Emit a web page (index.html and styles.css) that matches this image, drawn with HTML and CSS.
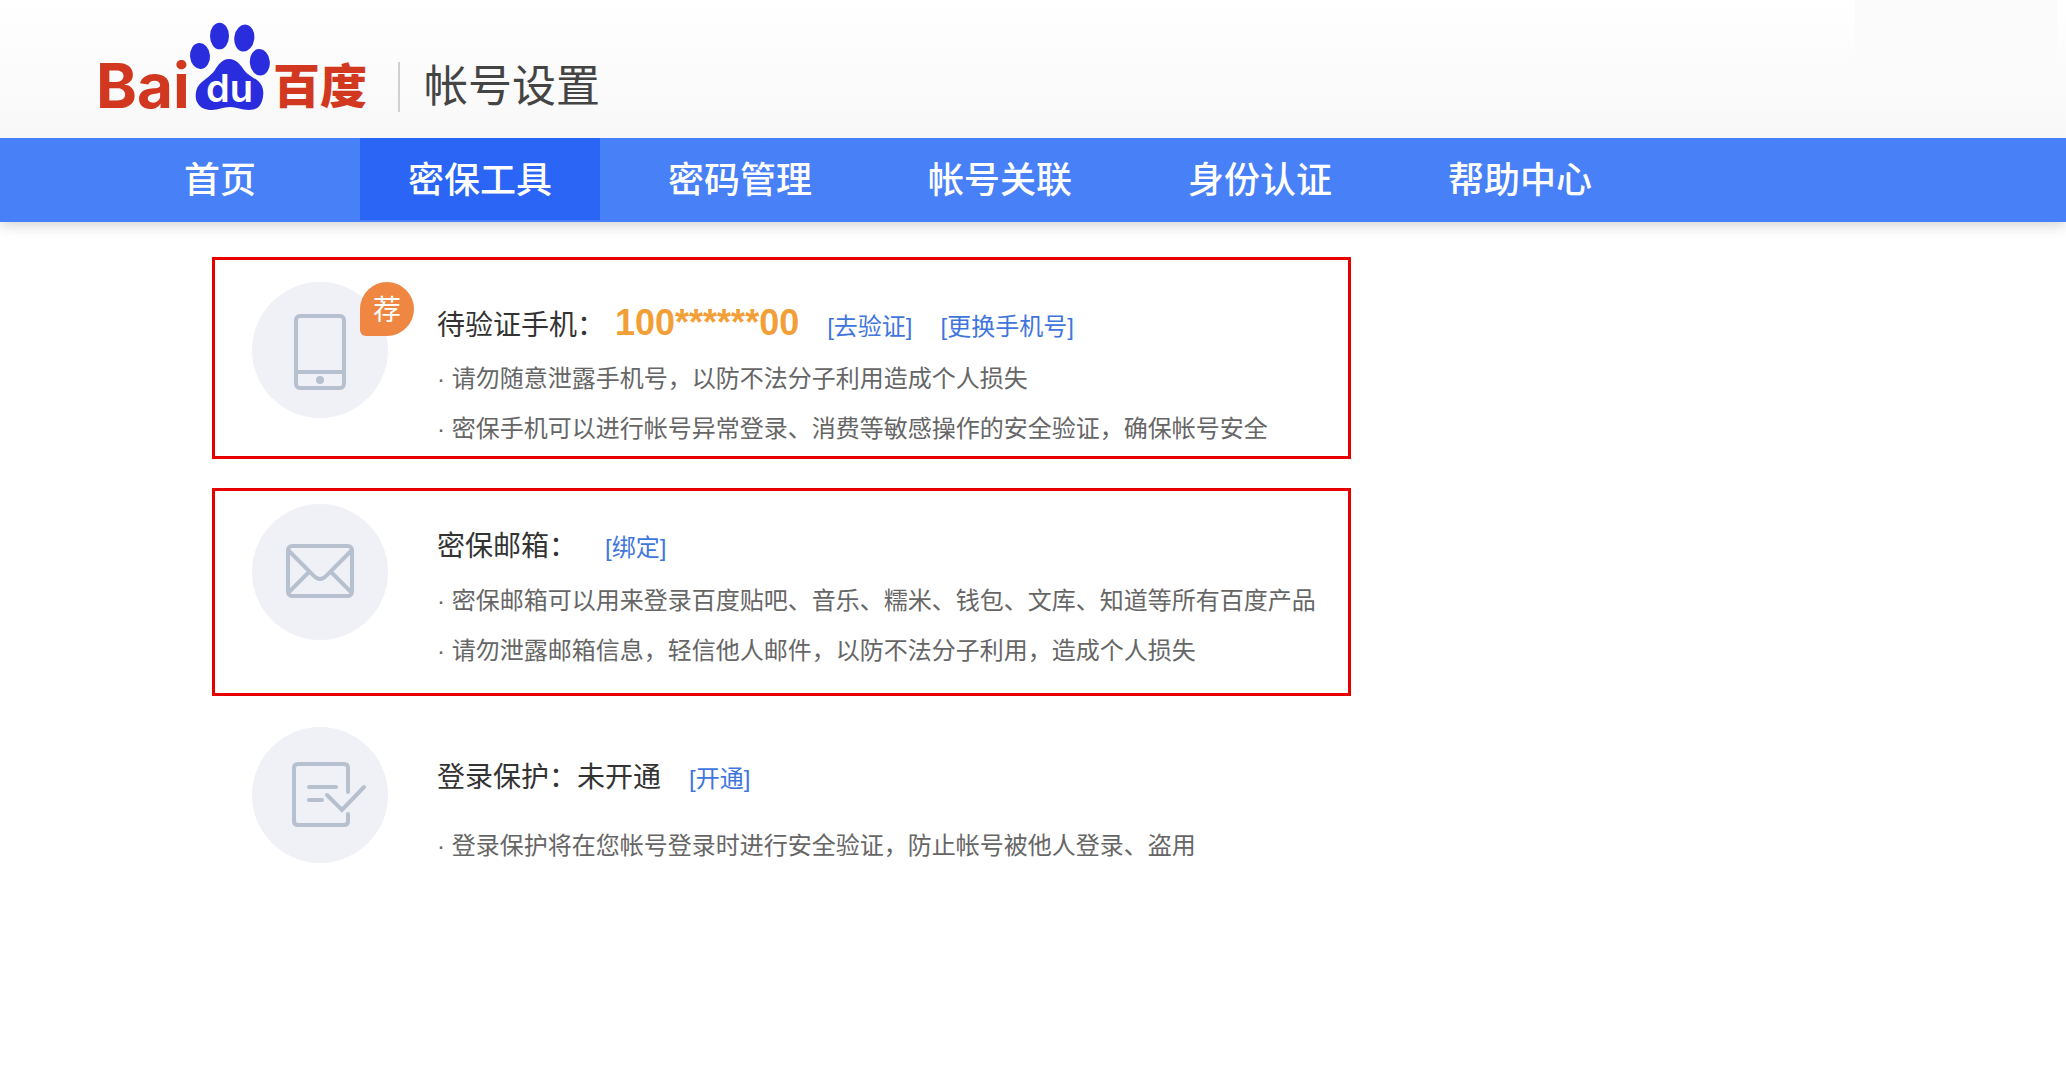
FILE: index.html
```
<!DOCTYPE html>
<html lang="zh-CN">
<head>
  <meta charset="UTF-8">
  <meta name="viewport" content="width=device-width, initial-scale=1.0">
  <title>帐号设置</title>
  <link rel="stylesheet" href="styles.css">
</head>
<body>
  <header class="header">
    <a class="logo" href="#">
      <svg width="272" height="110" viewBox="-4 0 272 110">
        <g fill="#2a2ddd">
          <ellipse cx="100" cy="36" rx="10" ry="13" transform="rotate(-5 100 36)"/>
          <ellipse cx="119.5" cy="16" rx="9.5" ry="13.3"/>
          <ellipse cx="144.3" cy="18" rx="10" ry="13.5" transform="rotate(8 144 18)"/>
          <ellipse cx="159.8" cy="42.3" rx="10" ry="13.3" transform="rotate(-5 160 42)"/>
          <path d="M129 39C122 39 118 45 115 50C110 57 103 60 99 65C95 70 95 78 97 82C100 88 105 90 112 90C118 90 123 87 130 87C137 87 141 90 149 90C156 90 160 87 162 81C164 75 164 68 160 63C156 58 148 56 144 50C140 44 136 39 129 39Z"/>
        </g>
        <text class="logo-red" x="-4" y="88">Bai</text>
        <text class="logo-du" x="106" y="82">du</text>
        <text class="logo-cn" x="173" y="83">百度</text>
      </svg>
    </a>
    <h1 class="title">帐号设置</h1>
    <div class="user"></div>
  </header>

  <nav class="nav">
    <a href="#">首页</a>
    <a href="#" class="active">密保工具</a>
    <a href="#">密码管理</a>
    <a href="#">帐号关联</a>
    <a href="#">身份认证</a>
    <a href="#">帮助中心</a>
  </nav>

  <main class="main">
    <section class="item item-phone">
      <div class="icon">
        <svg viewBox="0 0 136 136">
          <rect x="44" y="34" width="48" height="72" rx="4"/>
          <path d="M44 90H92"/>
          <circle class="dot" cx="68" cy="98" r="4"/>
        </svg>
        <span class="badge">荐</span>
      </div>
      <div class="info">
        <h2><span>待验证手机：</span><strong>100******00</strong><a href="#">[去验证]</a><a href="#">[更换手机号]</a></h2>
        <p>· 请勿随意泄露手机号，以防不法分子利用造成个人损失</p>
        <p>· 密保手机可以进行帐号异常登录、消费等敏感操作的安全验证，确保帐号安全</p>
      </div>
    </section>

    <section class="item item-mail">
      <div class="icon">
        <svg viewBox="0 0 136 136">
          <rect x="36" y="42" width="64" height="50" rx="4"/>
          <path d="M37 47L61 71Q68 79 75 71L99 47M37 88L56 69M99 88L80 69"/>
        </svg>
      </div>
      <div class="info">
        <h2><span>密保邮箱：</span><a href="#">[绑定]</a></h2>
        <p>· 密保邮箱可以用来登录百度贴吧、音乐、糯米、钱包、文库、知道等所有百度产品</p>
        <p>· 请勿泄露邮箱信息，轻信他人邮件，以防不法分子利用，造成个人损失</p>
      </div>
    </section>

    <section class="item item-login">
      <div class="icon">
        <svg viewBox="0 0 136 136">
          <path d="M96 65V41Q96 37 92 37H46Q42 37 42 41V94Q42 98 46 98H92Q96 98 96 94V87"/>
          <path d="M57 60H84M57 73H70M75 68L90 83L112 60"/>
        </svg>
      </div>
      <div class="info">
        <h2><span>登录保护：未开通</span><a href="#">[开通]</a></h2>
        <p>· 登录保护将在您帐号登录时进行安全验证，防止帐号被他人登录、盗用</p>
      </div>
    </section>
  </main>
</body>
</html>
```

FILE: styles.css
```
body {
  margin: 0;
  background: #fff;
  color: #333;
  font-family: "Liberation Sans", "Noto Sans CJK SC", sans-serif;
}

a {
  text-decoration: none;
}

.header {
  position: relative;
  z-index: 1;
  display: flex;
  align-items: flex-start;
  height: 138px;
  padding: 0 9px 0 96px;
  box-sizing: border-box;
  background: linear-gradient(#fff, #f8f8f8);
}

.logo {
  margin-top: 20px;
}

.logo svg {
  display: block;
  overflow: visible;
}

.logo-red {
  fill: #d2371f;
  font: bold 62px Inter, sans-serif;
}

.logo-du {
  fill: #fff;
  font: 600 38px Inter, sans-serif;
}

.logo-cn {
  fill: #d2371f;
  font: 900 47px "Noto Sans CJK SC", sans-serif;
}

.title {
  margin: 62px 0 0 30px;
  padding-left: 24px;
  border-left: 2px solid #d0d0d0;
  color: #444;
  font-size: 44px;
  font-weight: normal;
  line-height: 50px;
}

.user {
  width: 202px;
  height: 72px;
  margin-left: auto;
  background: #fbfbfb;
}

.nav {
  display: flex;
  gap: 20px;
  padding: 0 100px 2px;
  background: #4880f8;
  box-shadow: 0 2px 14px rgba(0, 0, 0, 0.2);
}

.nav a {
  width: 240px;
  height: 82px;
  color: #fff;
  font-size: 36px;
  font-weight: 500;
  line-height: 86px;
  text-align: center;
}

.nav .active {
  background: #2b65f6;
}

.main {
  max-width: 1139px;
  padding: 35px 20px 0 212px;
}

.item {
  display: flex;
  gap: 49px;
  padding-left: 37px;
  border: 3px solid #e80000;
}

.item-phone {
  padding-top: 22px;
  padding-bottom: 2px;
}

.item-mail {
  margin-top: 29px;
  padding-top: 13px;
  padding-bottom: 17px;
}

.item-login {
  margin-top: 28px;
  border-color: transparent;
}

.icon {
  position: relative;
  flex: none;
  width: 136px;
  height: 136px;
  border-radius: 50%;
  background: #f0f1f6;
}

.icon svg {
  display: block;
  fill: none;
  stroke: #b7c0ce;
  stroke-width: 4;
  stroke-linecap: round;
}

.icon .dot {
  fill: #b7c0ce;
  stroke: none;
}

.badge {
  position: absolute;
  top: 0;
  right: -26px;
  width: 54px;
  height: 54px;
  border-radius: 27px 27px 27px 6px;
  background: #ef8641;
  color: #fff;
  font-size: 28px;
  line-height: 58px;
  text-align: center;
}

.info {
  padding-top: 14px;
}

.info h2 {
  display: flex;
  align-items: baseline;
  height: 58px;
  margin: 0;
  font-size: 28px;
  font-weight: normal;
  line-height: 58px;
}

.info strong {
  margin-left: 10px;
  color: #f29f38;
  font-size: 36px;
  line-height: 54px;
}

.info h2 a {
  margin-left: 28px;
  color: #3f76dd;
  font-size: 24px;
}

.info p {
  margin: 0;
  color: #666;
  font-size: 24px;
  line-height: 50px;
}

.item-login .info {
  padding-top: 22px;
}

.item-login p {
  margin-top: 14px;
}
```
